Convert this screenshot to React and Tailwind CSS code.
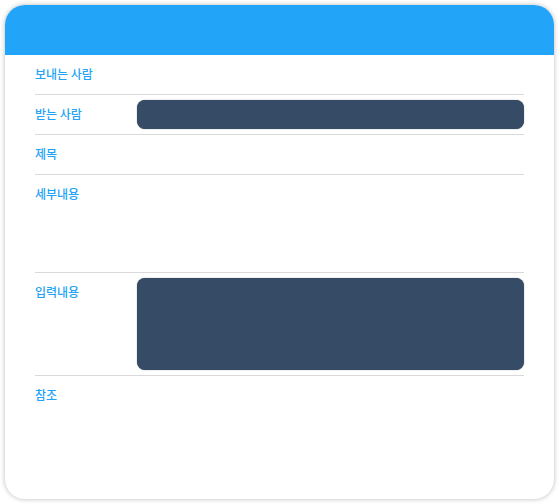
import React from 'react';

const Row = ({ label, children, minH = '', last = false }) => (
  <div className={`flex py-[5px] ${minH} ${last ? '' : 'border-b border-[#d9d9d9]'}`}>
    <div className="w-[102px] shrink-0 text-[12px] font-medium leading-[28px] text-[#23a3f5]">{label}</div>
    <div className="flex-1">{children}</div>
  </div>
);

const Field = ({ h }) => (
  <div className={`${h} w-full rounded-[8px] bg-[#364b66] shadow-[0_0_1px_rgba(0,0,0,0.7)]`} />
);

export default function App() {
  return (
    <div className="w-[559px] h-[504px] bg-white p-[5px] font-['Noto_Sans_CJK_KR',sans-serif]">
      <div className="h-full w-full overflow-hidden rounded-[20px] bg-white shadow-[0_0_5px_rgba(0,0,0,0.28)]">
        <div className="h-[50px] bg-[#22a4f8]" />
        <div className="px-[30px]">
          <Row label="보내는 사람">
            <div className="h-[29px]" />
          </Row>
          <Row label="받는 사람">
            <Field h="h-[29px]" />
          </Row>
          <Row label="제목">
            <div className="h-[29px]" />
          </Row>
          <Row label="세부내용" minH="min-h-[98px]" />
          <Row label="입력내용">
            <Field h="h-[92px]" />
          </Row>
          <Row label="참조" last />
        </div>
      </div>
    </div>
  );
}
